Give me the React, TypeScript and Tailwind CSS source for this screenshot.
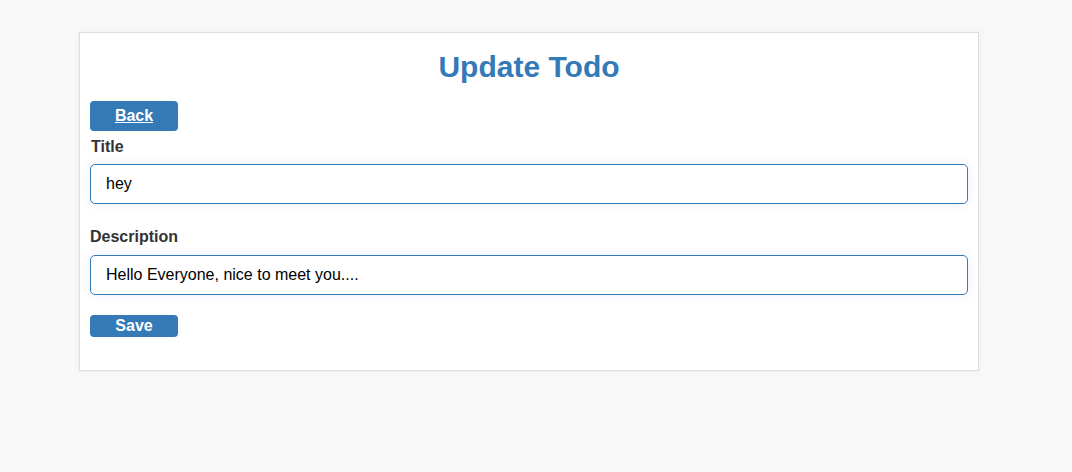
import React from "react";

export default function App() {
  return (
    <div className="min-h-[472px] w-full bg-[#f8f8f8] pt-[32px] pl-[79px]" style={{ fontFamily: '"Liberation Sans", Arial, sans-serif' }}>
      <div className="w-[900px] border border-[#dddddd] bg-white px-[10px] pt-[17px] pb-[33px] shadow-[0_0_6px_rgba(0,0,0,0.06)]">
        <h1 className="text-center text-[30px] font-bold leading-[34px] text-[#337ab7]">Update Todo</h1>
        <button className="mt-[17px] flex h-[30px] w-[88px] items-center justify-center rounded-[4px] bg-[#337ab7] text-[16px] font-bold text-white underline">
          Back
        </button>
        <div className="mt-[7px] pl-[1px] text-[16px] font-bold leading-[18px] text-[#333333]">Title</div>
        <div className="mt-[8px] flex h-[40px] w-[878px] items-center rounded-[5px] border border-[#337ab7] bg-white pl-[15px] text-[16px] text-black shadow-[0_0_10px_rgba(110,110,255,0.14)]">
          hey
        </div>
        <div className="mt-[24px] text-[16px] font-bold leading-[18px] text-[#333333]">Description</div>
        <div className="mt-[9px] flex h-[40px] w-[878px] items-center rounded-[5px] border border-[#337ab7] bg-white pl-[15px] text-[16px] text-black shadow-[0_0_10px_rgba(110,110,255,0.14)]">
          Hello Everyone, nice to meet you....
        </div>
        <button className="mt-[20px] flex h-[22px] w-[88px] items-center justify-center rounded-[4px] bg-[#337ab7] text-[16px] font-bold text-white">
          Save
        </button>
      </div>
    </div>
  );
}
